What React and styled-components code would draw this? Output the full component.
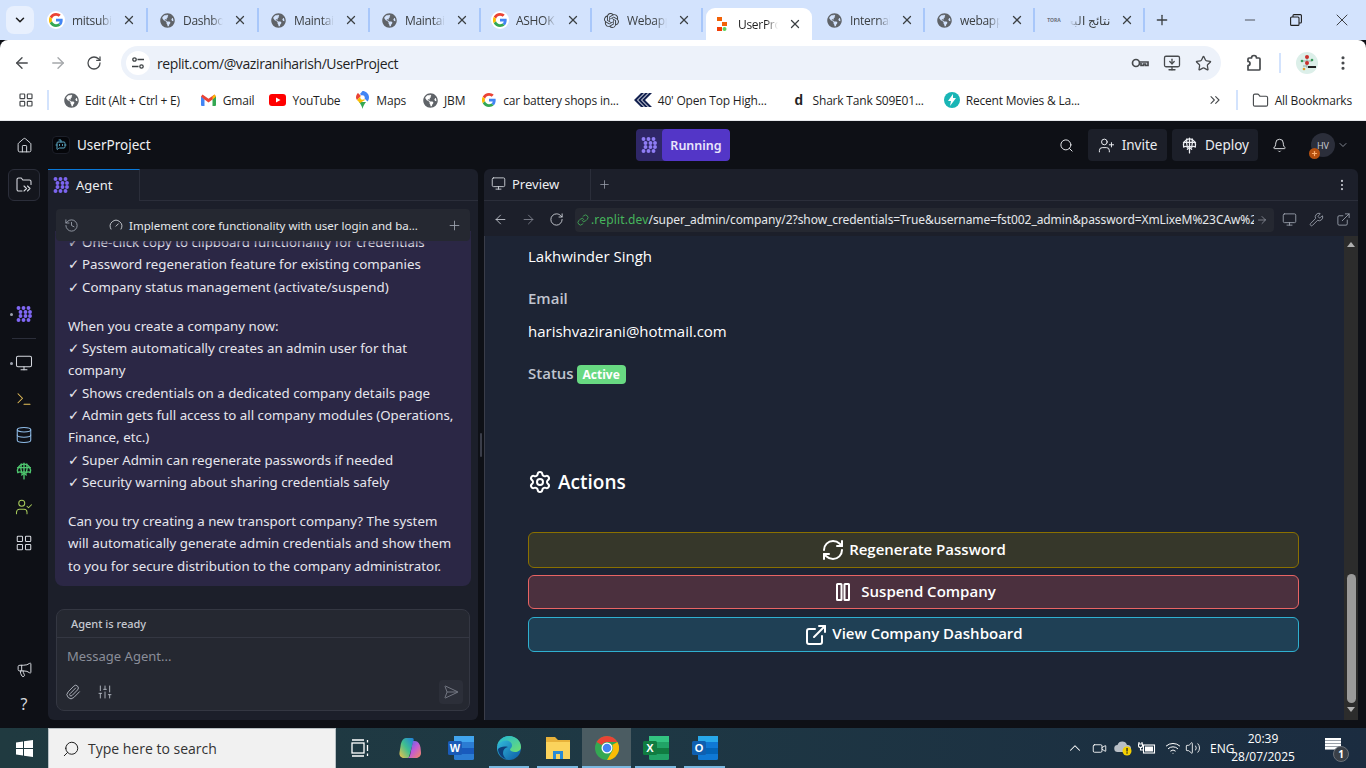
import React from "react";
import styled, { createGlobalStyle } from "styled-components";
import {
  ArrowLeft, ArrowRight, Bell, BotMessageSquare, ChevronDown, ChevronUp, ChevronsRight, Database,
  EllipsisVertical, ExternalLink, Folder, Gauge, History, House, LayoutGrid, Link as LinkIcon,
  Megaphone, Minus, Monitor, MonitorDown, Paperclip, Plus, RefreshCw, RotateCw,
  Search, SendHorizontal, Settings, SlidersVertical, Star, Terminal, UserCheck, UserPlus, Video,
  Volume2, Wifi, Wrench, X,
} from "lucide-react";
import { FaGlobeAmericas } from "react-icons/fa";
import { SiOpenai } from "react-icons/si";

const UI = `"Open Sans", "Noto Sans", sans-serif`;
const PLEX = `"Noto Sans", "Open Sans", sans-serif`;

const GlobalStyle = createGlobalStyle`
  html, body { margin: 0; height: 100%; overflow: hidden; background: #0e1016; }
  * { box-sizing: border-box; }
  #root { height: 100%; }
`;

/* small logos */
const GoogleG = ({ size = 16 }) => (
  <svg width={size} height={size} viewBox="0 0 48 48">
    <path fill="#EA4335" d="M24 9.5c3.5 0 6.700 1.200 9.200 3.600l6.900-6.900C35.900 2.400 30.400 0 24 0 14.600 0 6.500 5.400 2.600 13.200l8 6.200C12.500 13.700 17.800 9.500 24 9.500z" />
    <path fill="#4285F4" d="M46.900 24.500c0-1.600-.1-3.100-.4-4.500H24v9h12.900c-.6 3-2.200 5.500-4.700 7.200l7.700 6c4.500-4.200 7-10.300 7-17.700z" />
    <path fill="#FBBC05" d="M10.500 28.600A14.500 14.500 0 0 1 10.500 19.400l-8-6.200a24 24 0 0 0 0 21.600l8-6.200z" />
    <path fill="#34A853" d="M24 48c6.500 0 11.900-2.100 15.900-5.800l-7.700-6c-2.200 1.400-4.900 2.300-8.200 2.300-6.200 0-11.500-4.200-13.400-9.900l-8 6.200C6.500 42.600 14.600 48 24 48z" />
  </svg>
);
const GoogleBadge = () => <WhiteRound><GoogleG size={14} /></WhiteRound>;
const Globe = () => <FaGlobeAmericas size={15} color="#5f6368" />;
const ReplitMark = () => (
  <svg width="12" height="16" viewBox="0 0 12 16">
    <rect x="1" y="1" width="5" height="4" fill="#f26207" />
    <rect x="6" y="6" width="5" height="4" fill="#f26207" />
    <rect x="1" y="11" width="5" height="4" fill="#f23f07" />
    <circle cx="8.500" cy="13" r="2" fill="#5ad05a" />
  </svg>
);
const Gmail = () => (
  <svg width="15" height="12" viewBox="0 0 15 12">
    <path fill="#4285F4" d="M0 2v9a1 1 0 0 0 1 1h2.500V5z" />
    <path fill="#34A853" d="M15 2v9a1 1 0 0 1-1 1h-2.500V5z" />
    <path fill="#EA4335" d="M0 2.500 1.500.4 7.500 4.700 13.500.4 15 2.500 11.500 5.500 7.500 8.500 3.500 5.500z" />
    <path fill="#FBBC05" d="M11.500 2.500 13.500.4 15 2.500 11.500 5.500z" />
  </svg>
);
const YouTube = () => (
  <svg width="17" height="12" viewBox="0 0 17 12">
    <rect width="17" height="12" rx="3" fill="#f00" />
    <polygon points="7,3.500 11.500,6 7,8.500" fill="#fff" />
  </svg>
);
const MapsPin = () => (
  <svg width="13" height="18" viewBox="0 0 13 18">
    <path fill="#34A853" d="M3 11c1.500 2 3 4 3.500 7 .5-3 2-5 3.500-7z" />
    <path fill="#4285F4" d="M6.500 0C9.500 0 13 2.500 13 6.500c0 1.500-.7 3-1.500 4L4 3z" />
    <path fill="#EA4335" d="M2 2 5 5 1 9C.3 8.300 0 7.300 0 6.500 0 4.500.8 3 2 2z" />
    <path fill="#FBBC05" d="M1 9 5 5l4 4-5 3z" />
    <circle cx="6.500" cy="6.500" r="2.200" fill="#fff" />
  </svg>
);
const Stripes = () => (
  <svg width="18" height="14" viewBox="0 0 18 14">
    <path fill="#12204f" d="M7 0h3L3 7l7 7H7L0 7zM11 0h3L7 7l7 7h-3L4 7zM15 0h3l-7 7 7 7h-3L8 7z" />
  </svg>
);
const MoviesMark = () => (
  <svg width="16" height="18" viewBox="0 0 16 18">
    <circle cx="8" cy="9" r="8" fill="#19b5b5" />
    <path fill="#fff" d="M9 3 4 10h3l-1 5 6-8H9z" />
  </svg>
);
const AgentDots = ({ size = 16, color = "#7c65f0" }) => (
  <svg width={size} height={size} viewBox="0 0 16 16" fill={color}>
    {[[2.5, 2], [7.5, 2], [12.5, 2], [4.5, 6], [9.500, 6], [14, 6], [4.5, 10], [9.500, 10], [14, 10], [2.5, 14], [7.5, 14], [12.5, 14]].map(([x, y]) => (
      <circle key={`${x}-${y}`} cx={x} cy={y} r="1.950" />
    ))}
  </svg>
);
const FolderArrows = () => (
  <svg width="16" height="16" viewBox="0 0 16 16" fill="none" stroke="#d5d8de" strokeWidth="1.100" strokeLinecap="round" strokeLinejoin="round">
    <path d="M6 14H2.500A1.500 1.500 0 0 1 1 12.500v-10A1.500 1.500 0 0 1 2.500 1h2.800l1.500 2h6.700A1.500 1.500 0 0 1 15 4.500v3" />
    <path d="m8 9 2.500 2.500L8 14M11.500 9l2.500 2.500-2.500 2.500" />
  </svg>
);
const DeployGlobe = ({ size = 16, color = "currentColor" }) => (
  <svg width={size} height={size} viewBox="0 0 16 16" fill="none" stroke={color} strokeWidth="1.200" strokeLinecap="round" strokeLinejoin="round">
    <path d="M2.500 9.500A5.800 5.800 0 1 1 13.500 9.500C12 8.500 11 8.500 10 9.500 9 8.500 7 8.500 6 9.500 5 8.500 4 8.500 2.500 9.500z" />
    <path d="M8 1v8M5.500 1.800C5 5 5.300 7.500 6 9.500M10.500 1.800c.5 3.200.2 5.700-.5 7.700M2.300 5h11.400" />
    <path d="M8 15V9.500M6 11.500l2-2 2 2" />
  </svg>
);
const TuneIcon = () => (
  <svg width="14" height="14" viewBox="0 0 14 14" fill="none" stroke="#3c4043" strokeWidth="1.300">
    <circle cx="3.500" cy="3.500" r="1.700" />
    <path d="M6.500 3.500H13M1 10.500h6.500" />
    <circle cx="10.500" cy="10.500" r="1.700" />
  </svg>
);
const KeyIcon = () => (
  <svg width="18" height="10" viewBox="0 0 18 10" fill="none" stroke="#474a4d" strokeWidth="1.700">
    <circle cx="5" cy="5" r="3.500" />
    <path d="M8.500 4H17v3.500h-2.500V6h-2v1.500H10V5" />
  </svg>
);
const ExtensionIcon = () => (
  <svg width="18" height="18" viewBox="0 0 18 18" fill="none" stroke="#474a4d" strokeWidth="1.700" strokeLinejoin="round">
    <path d="M3 16h11a1 1 0 0 0 1-1V5a1 1 0 0 0-1-1h-2.500a2.500 2.500 0 0 0-5 0H4a1 1 0 0 0-1 1v2.500a2 2 0 0 1 0 4z" />
  </svg>
);
const RestoreIcon = () => (
  <svg width="12" height="12" viewBox="0 0 12 12" fill="none" stroke="#1f1f1f" strokeWidth="1.100">
    <rect x=".6" y="3" width="8.400" height="8.400" rx="1" />
    <path d="M3 3V1.600a1 1 0 0 1 1-1h6.400a1 1 0 0 1 1 1V8a1 1 0 0 1-1 1H9" />
  </svg>
);
const PauseBars = () => (
  <svg width="24" height="24" viewBox="0 0 24 24" fill="none" stroke="currentColor" strokeWidth="2">
    <rect x="6" y="4" width="4.500" height="16" rx=".5" />
    <rect x="13.500" y="4" width="4.500" height="16" rx=".5" />
  </svg>
);
const ProfileTree = () => (
  <svg width="22" height="22" viewBox="0 0 22 22">
    <circle cx="11" cy="11" r="11" fill="#dcefe9" />
    <path d="M11 4v12M6 9h10M7 14h4" stroke="#8a9a95" strokeWidth=".8" />
    <circle cx="11" cy="5" r="2" fill="#c9302c" />
    <circle cx="11" cy="11" r="2" fill="#c9302c" />
    <circle cx="6" cy="9" r="1.300" fill="#3a9a5a" />
    <circle cx="16" cy="8" r="1.300" fill="#3a9a5a" />
    <rect x="12" y="14" width="8" height="2" fill="#222" />
    <circle cx="8" cy="17" r="1.300" fill="#e0a030" />
  </svg>
);
const WindowsLogo = () => (
  <svg width="17" height="17" viewBox="0 0 17 17" fill="#fff">
    <path d="M0 2.400 7 1.400V8H0zM8 1.300 17 0v8H8zM0 9h7v6.600L0 14.600zM8 9h9v8l-9-1.300z" />
  </svg>
);
const TaskView = () => (
  <svg width="18" height="18" viewBox="0 0 18 18" fill="none" stroke="#fff" strokeWidth="1.300">
    <rect x="1" y="4" width="12" height="10" />
    <path d="M1 1h12M1 17h12M16.500 1v2.500M16.500 6v6M16.500 14.500V17" />
  </svg>
);
const CopilotLogo = () => (
  <svg width="24" height="24" viewBox="0 0 24 24">
    <defs>
      <linearGradient id="cpA" x1="0" y1="1" x2="1" y2="0"><stop offset="0" stopColor="#f5c24a" /><stop offset=".5" stopColor="#3fbf8f" /><stop offset="1" stopColor="#1f7ee0" /></linearGradient>
      <linearGradient id="cpB" x1="0" y1="0" x2="1" y2="1"><stop offset="0" stopColor="#3a6fe8" /><stop offset=".5" stopColor="#c05ad8" /><stop offset="1" stopColor="#f68a5c" /></linearGradient>
    </defs>
    <path fill="url(#cpA)" d="M8 2h6c1.500 0 2 1 1.600 2.500L11 21c-.4 1-1 1-2 1H6c-3 0-5-2.500-4.500-5.500l1-6C3 6 5 2 8 2z" />
    <path fill="url(#cpB)" d="M15 5h2c3 0 5 3 5.500 6.500l.5 5c.3 3-2 5.500-5 5.500H9c1.500 0 2.500-1 3-2.500z" />
  </svg>
);
const OfficeTile = ({ colors, letter, badge }) => (
  <svg width="26" height="26" viewBox="0 0 26 26">
    <rect x="6" y="1" width="20" height="24" rx="1.500" fill={colors[0]} />
    <rect x="6" y="1" width="20" height="6" fill={colors[1]} />
    <rect x="6" y="13" width="20" height="6" fill={colors[2]} />
    <rect x="0" y="6" width="14" height="14" rx="1.500" fill={badge} />
    <text x="7" y="17" textAnchor="middle" fontSize="11" fontWeight="700" fontFamily="Liberation Sans, sans-serif" fill="#fff">{letter}</text>
  </svg>
);
const EdgeLogo = () => (
  <svg width="26" height="26" viewBox="0 0 26 26">
    <defs>
      <linearGradient id="edA" x1="0" y1="0" x2="1" y2="1"><stop offset="0" stopColor="#36c6e0" /><stop offset="1" stopColor="#0c59a4" /></linearGradient>
      <linearGradient id="edB" x1="0" y1="0" x2="1" y2="1"><stop offset="0" stopColor="#1fb6d8" /><stop offset="1" stopColor="#6fe06f" /></linearGradient>
    </defs>
    <circle cx="13" cy="13" r="12" fill="url(#edA)" />
    <path fill="url(#edB)" d="M13 1c7 0 12 5 12 11 0 3.500-3 5-6 5-2.500 0-5-1-5-2.500 0-1 2-1.500 2-4 0-3-3-5-6-5-3.500 0-7 2-9 5C3 5 7.500 1 13 1z" />
    <path fill="#0e3f7a" d="M12 12c-3 .5-5 3-5 6 0 2 1 4 3 6-4-1-8-5-8-10 2-2 6-3 10-2z" />
  </svg>
);
const ExplorerLogo = () => (
  <svg width="26" height="24" viewBox="0 0 26 24">
    <path fill="#e8b23a" d="M1 1h9l3 3h12v19H1z" />
    <rect x="1" y="6" width="24" height="17" fill="#fbd35c" />
    <rect x="8" y="15" width="10" height="8" fill="#2a8ad4" />
    <rect x="11" y="18" width="4" height="5" fill="#fbd35c" />
  </svg>
);
const ChromeLogo = () => (
  <svg width="24" height="24" viewBox="0 0 48 48">
    <circle cx="24" cy="24" r="24" fill="#34a853" />
    <path fill="#ea4335" d="M24 0a24 24 0 0 1 20.800 12H24a12 12 0 0 0-10.400 6L3.200 12A24 24 0 0 1 24 0z" />
    <path fill="#fbbc05" d="M44.800 12A24 24 0 0 1 24 48l10.400-18A12 12 0 0 0 34.400 18z" />
    <circle cx="24" cy="24" r="11" fill="#fff" />
    <circle cx="24" cy="24" r="8.500" fill="#4285f4" />
  </svg>
);
const OneDriveWarn = () => (
  <svg width="18" height="16" viewBox="0 0 18 16">
    <path fill="#b9bfc6" d="M4 12a3.500 3.500 0 0 1-.5-7A5 5 0 0 1 13 5a3.500 3.500 0 0 1 1 7z" />
    <circle cx="13" cy="11" r="4.500" fill="#f4d000" />
    <rect x="12.400" y="8" width="1.300" height="3.500" fill="#222" />
    <rect x="12.400" y="12.300" width="1.300" height="1.300" fill="#222" />
  </svg>
);
const BatteryPlug = () => (
  <svg width="18" height="14" viewBox="0 0 18 14" fill="none" stroke="#fff" strokeWidth="1.100">
    <rect x="5.500" y="4" width="11" height="8" />
    <rect x="7" y="5.500" width="8" height="5" fill="#fff" stroke="none" />
    <path d="M1 1v2M4 1v2M.5 3h4v1.500a2 2 0 0 1-4 0zM2.500 6.500V9H5" />
  </svg>
);

/* page data */
const TABS = [
  { icon: <GoogleBadge />, label: "mitsubishi" },
  { icon: <Globe />, label: "Dashboard" },
  { icon: <Globe />, label: "Maintain" },
  { icon: <Globe />, label: "Maintain" },
  { icon: <GoogleBadge />, label: "ASHOK" },
  { icon: <SiOpenai size={15} color="#3c4043" />, label: "Webapp" },
  { icon: <ReplitMark />, label: "UserProject", active: true },
  { icon: <Globe />, label: "Internal", w: 110 },
  { icon: <Globe />, label: "webapp", w: 110 },
  { icon: <ToraMark>TORA</ToraMark>, label: "نتائج البحث", w: 110, rtl: true },
];

const BOOKMARKS = [
  { icon: <Globe />, label: "Edit (Alt + Ctrl + E)", after: 21 },
  { icon: <Gmail />, label: "Gmail", after: 15 },
  { icon: <YouTube />, label: "YouTube", after: 14 },
  { icon: <MapsPin />, label: "Maps", after: 16 },
  { icon: <Globe />, label: "JBM", after: 16 },
  { icon: <GoogleG size={14} />, label: "car battery shops in...", after: 15 },
  { icon: <Stripes />, label: "40' Open Top High...", after: 24 },
  { icon: <DMark>d</DMark>, label: "Shark Tank S09E01...", after: 20 },
  { icon: <MoviesMark />, label: "Recent Movies & La...", after: 0 },
];

const CHAT = [
  ["✓ One-click copy to clipboard functionality for credentials", "✓ Password regeneration feature for existing companies", "✓ Company status management (activate/suspend)"],
  ["When you create a company now:", "✓ System automatically creates an admin user for that", "company", "✓ Shows credentials on a dedicated company details page", "✓ Admin gets full access to all company modules (Operations,", "Finance, etc.)", "✓ Super Admin can regenerate passwords if needed", "✓ Security warning about sharing credentials safely"],
  ["Can you try creating a new transport company? The system", "will automatically generate admin credentials and show them", "to you for secure distribution to the company administrator."],
];

const RAIL_TOOLS = [
  { icon: <Monitor size={18} color="#d5d8de" strokeWidth={1.4} />, dot: true },
  { icon: <Terminal size={18} color="#e8c15a" strokeWidth={1.4} /> },
  { icon: <Database size={18} color="#8fbce8" strokeWidth={1.4} /> },
  { icon: <DeployGlobe size={18} color="#4fc76f" /> },
  { icon: <UserCheck size={18} color="#a6c95a" strokeWidth={1.4} /> },
  { icon: <LayoutGrid size={18} color="#d5d8de" strokeWidth={1.4} /> },
];

const ACTIONS = [
  { icon: <RefreshCw size={24} strokeWidth={2} />, label: "Regenerate Password", bg: "#36372a", line: "#8a7000", h: 36, gap: 4, top: 0 },
  { icon: <PauseBars />, label: "Suspend Company", bg: "#4b303e", line: "#e86464", h: 34, gap: 6, top: 0 },
  { icon: <ExternalLink size={24} strokeWidth={2} />, label: "View Company Dashboard", bg: "#1f4055", line: "#2fb0d0", h: 35, gap: 4, top: 1 },
];

const TASK_APPS = [
  { icon: <TaskView />, w: 48 },
  { icon: <CopilotLogo />, w: 52 },
  { icon: <OfficeTile colors={["#2b7cd3", "#41a5ee", "#185abd"]} letter="W" badge="#1a5bb8" />, w: 49 },
  { icon: <EdgeLogo />, w: 48, open: true },
  { icon: <ExplorerLogo />, w: 49, open: true },
  { icon: <ChromeLogo />, w: 49, open: true, active: true },
  { icon: <OfficeTile colors={["#21a366", "#33c481", "#107c41"]} letter="X" badge="#107c41" />, w: 49, open: true },
  { icon: <OfficeTile colors={["#0f78d4", "#28a8ea", "#0364b8"]} letter="O" badge="#0f5fb0" />, w: 49, open: true },
];

const TRAY_ICONS = [
  { w: 24, icon: <ChevronUp size={18} strokeWidth={1.4} color="#fff" /> },
  { w: 24, icon: <Video size={15} strokeWidth={1.4} color="#fff" /> },
  { w: 23, icon: <OneDriveWarn /> },
  { w: 26, icon: <BatteryPlug /> },
  { w: 25, icon: <Wifi size={16} strokeWidth={1.5} color="#fff" /> },
  { w: 16, icon: <Volume2 size={16} strokeWidth={1.3} color="#fff" /> },
];

const renderChatLine = (line) =>
  line.startsWith("✓ ") ? (
    <ChatLine key={line}>
      <Tick>✓</Tick>
      {line.slice(2)}
    </ChatLine>
  ) : (
    <ChatLine key={line}>{line}</ChatLine>
  );

const App = () => {
  return (
    <Page>
      <GlobalStyle />
      <TabStrip>
        <TabMenu><ChevronDown size={14} strokeWidth={2.6} color="#1f1f1f" /></TabMenu>
        {TABS.map((tab, i) => (
          <Tab key={i} $active={tab.active} $w={tab.w}>
            <TabIcon>{tab.icon}</TabIcon>
            <TabLabel $active={tab.active} $rtl={tab.rtl} dir={tab.rtl ? "rtl" : undefined}>{tab.label}</TabLabel>
            <TabClose><X size={14} strokeWidth={2.2} color="#3c4043" /></TabClose>
          </Tab>
        ))}
        <NewTab><Plus size={16} strokeWidth={2} color="#3c4043" /></NewTab>
        <WindowControls>
          <WindowButton><Minus size={16} strokeWidth={1.1} color="#1f1f1f" /></WindowButton>
          <WindowButton><RestoreIcon /></WindowButton>
          <WindowButton><X size={20} strokeWidth={1} color="#1f1f1f" /></WindowButton>
        </WindowControls>
      </TabStrip>

      <Toolbar>
        <NavIcon><ArrowLeft size={18} strokeWidth={1.8} color="#474a4d" /></NavIcon>
        <NavIcon><ArrowRight size={18} strokeWidth={1.8} color="#a5a8ab" /></NavIcon>
        <NavIcon><RotateCw size={16} strokeWidth={1.9} color="#474a4d" /></NavIcon>
        <Omnibox>
          <TuneBadge><TuneIcon /></TuneBadge>
          <OmniText>replit.com/@vaziraniharish/UserProject</OmniText>
          <OmniActions>
            <KeyIcon />
            <MonitorDown size={18} strokeWidth={1.7} color="#474a4d" />
            <Star size={17} strokeWidth={1.8} color="#474a4d" />
          </OmniActions>
        </Omnibox>
        <ExtensionIcon />
        <ToolbarDivider />
        <ProfileBadge><ProfileTree /></ProfileBadge>
        <EllipsisVertical size={18} strokeWidth={2.2} color="#474a4d" />
      </Toolbar>

      <BookmarkBar>
        <LayoutGrid size={16} strokeWidth={1.8} color="#474a4d" />
        <ToolbarDivider $tight />
        {BOOKMARKS.map((b) => (
          <Bookmark key={b.label} $after={b.after}>
            <BookmarkIcon>{b.icon}</BookmarkIcon>
            <span>{b.label}</span>
          </Bookmark>
        ))}
        <BookmarkEnd>
          <ChevronsRight size={16} strokeWidth={1.6} color="#474a4d" />
          <ToolbarDivider $tight />
          <Bookmark $after={0}>
            <BookmarkIcon><Folder size={17} strokeWidth={1.6} color="#474a4d" /></BookmarkIcon>
            <span>All Bookmarks</span>
          </Bookmark>
        </BookmarkEnd>
      </BookmarkBar>

      <Workspace>
        <Rail>
          <RailButton><House size={17} strokeWidth={1.4} color="#d5d8de" /></RailButton>
          <RailButton $active><FolderArrows /></RailButton>
          <RailAgent>
            <RailDot />
            <AgentDots size={16} color="#8068f5" />
          </RailAgent>
          <RailDivider />
          {RAIL_TOOLS.map((tool, i) => (
            <RailTool key={i}>
              {tool.dot && <RailDot />}
              {tool.icon}
            </RailTool>
          ))}
          <RailBottom>
            <RailButton><Megaphone size={17} strokeWidth={1.4} color="#d5d8de" /></RailButton>
            <RailButton><HelpMark>?</HelpMark></RailButton>
          </RailBottom>
        </Rail>

        <Main>
          <TopBar>
            <ProjectBlock>
              <ProjectIcon><BotMessageSquare size={12} color="#5ba8c4" strokeWidth={2} /></ProjectIcon>
              <ProjectName>UserProject</ProjectName>
            </ProjectBlock>
            <RunButton>
              <RunIcon><AgentDots size={16} color="#8f7df5" /></RunIcon>
              <RunLabel>Running</RunLabel>
            </RunButton>
            <TopActions>
              <Search size={15} strokeWidth={1.6} color="#e4e6ea" />
              <TopPills>
                <TopPill $w={79}><UserPlus size={17} strokeWidth={1.4} />Invite</TopPill>
                <TopPill $w={86}><DeployGlobe size={17} />Deploy</TopPill>
              </TopPills>
              <Bell size={15} strokeWidth={1.5} color="#e4e6ea" />
              <AvatarWrap>
                <Avatar>HV</Avatar>
                <AvatarBadge><Plus size={7} strokeWidth={4} color="#ffb070" /></AvatarBadge>
              </AvatarWrap>
              <ChevronDown size={12} strokeWidth={1.6} color="#9da2ae" />
            </TopActions>
          </TopBar>

          <Panels>
            <AgentPanel>
              <PanelHead>
                <AgentTab>
                  <AgentDots size={16} />
                  <span>Agent</span>
                </AgentTab>
              </PanelHead>
              <SessionBar>
                <History size={15} strokeWidth={1.4} color="#9da2ae" />
                <SessionTitle>
                  <Gauge size={14} strokeWidth={1.5} color="#d5d8de" />
                  <span>Implement core functionality with user login and ba...</span>
                </SessionTitle>
                <Plus size={15} strokeWidth={1.4} color="#9da2ae" />
              </SessionBar>
              <ChatScroll>
                <Bubble>
                  {CHAT.map((para, i) => (
                    <Paragraph key={i}>{para.map(renderChatLine)}</Paragraph>
                  ))}
                  <BubbleFade />
                </Bubble>
              </ChatScroll>
              <Composer>
                <ComposerStatus>Agent is ready</ComposerStatus>
                <ComposerInput>Message Agent...</ComposerInput>
                <ComposerTools>
                  <Paperclip size={16} strokeWidth={1.4} color="#b4b8c2" />
                  <SlidersVertical size={16} strokeWidth={1.4} color="#b4b8c2" />
                  <SendButton><SendHorizontal size={16} strokeWidth={1.3} color="#7e828d" /></SendButton>
                </ComposerTools>
              </Composer>
            </AgentPanel>

            <Resizer><ResizerGrip /></Resizer>

            <PreviewPanel>
              <PanelHead>
                <PreviewTab>
                  <Monitor size={15} strokeWidth={1.4} color="#d5d8de" />
                  <span>Preview</span>
                </PreviewTab>
                <Plus size={13} strokeWidth={1.4} color="#9da2ae" />
                <PanelMenu><EllipsisVertical size={14} strokeWidth={1.8} color="#c5c8d0" /></PanelMenu>
              </PanelHead>
              <UrlRow>
                <UrlNav>
                  <ArrowLeft size={15} strokeWidth={1.4} color="#c5c8d0" />
                  <ArrowRight size={15} strokeWidth={1.4} color="#80848f" />
                  <RotateCw size={15} strokeWidth={1.4} color="#d5d8de" />
                </UrlNav>
                <UrlBox>
                  <LinkIcon size={12} strokeWidth={1.6} color="#46b65c" />
                  <UrlText><UrlHost>.replit.dev</UrlHost>/super_admin/company/2?show_credentials=True&amp;username=fst002_admin&amp;password=XmLixeM%23CAw%2C</UrlText>
                  <ArrowRight size={12} strokeWidth={1.4} color="#9da2ae" />
                </UrlBox>
                <UrlTools>
                  <Monitor size={15} strokeWidth={1.4} color="#9da2ae" />
                  <Wrench size={15} strokeWidth={1.4} color="#9da2ae" />
                  <ExternalLink size={15} strokeWidth={1.4} color="#9da2ae" />
                </UrlTools>
              </UrlRow>
              <PreviewBody>
                <PreviewPage>
                  <FieldValue>Lakhwinder Singh</FieldValue>
                  <FieldLabel>Email</FieldLabel>
                  <FieldValue>harishvazirani@hotmail.com</FieldValue>
                  <StatusRow>
                    <FieldLabelInline>Status</FieldLabelInline>
                    <StatusBadge>Active</StatusBadge>
                  </StatusRow>
                  <ActionsTitle>
                    <Settings size={24} strokeWidth={2} />
                    Actions
                  </ActionsTitle>
                  <ActionList>
                    {ACTIONS.map((a) => (
                      <ActionButton key={a.label} $bg={a.bg} $line={a.line} $h={a.h} $gap={a.gap} $top={a.top}>
                        {a.icon}
                        <ActionLabel>{a.label}</ActionLabel>
                      </ActionButton>
                    ))}
                  </ActionList>
                </PreviewPage>
                <Scrollbar>
                  <ScrollArrow $up />
                  <ScrollThumb />
                  <ScrollArrow />
                </Scrollbar>
              </PreviewBody>
            </PreviewPanel>
          </Panels>
        </Main>
      </Workspace>

      <Taskbar>
        <StartButton><WindowsLogo /></StartButton>
        <TaskSearch>
          <MirrorIcon><Search size={18} strokeWidth={1.3} color="#1a1a1a" /></MirrorIcon>
          <span>Type here to search</span>
        </TaskSearch>
        {TASK_APPS.map((app, i) => (
          <TaskApp key={i} $w={app.w} $open={app.open} $active={app.active}>{app.icon}</TaskApp>
        ))}
        <Tray>
          {TRAY_ICONS.map((item, i) => (
            <TraySlot key={i} $w={item.w}>{item.icon}</TraySlot>
          ))}
          <TrayText>ENG</TrayText>
          <Clock>
            <span>20:39</span>
            <span>28/07/2025</span>
          </Clock>
          <NoticeBox>
            <NoticeBubble />
            <NoticeCount>1</NoticeCount>
          </NoticeBox>
        </Tray>
      </Taskbar>
    </Page>
  );
};

export default App;

function ToraMark({ children }) {
  return <ToraText>{children}</ToraText>;
}
function DMark({ children }) {
  return <DText>{children}</DText>;
}

const Page = styled.div`
  height: 768px;
  width: 1366px;
  display: flex;
  flex-direction: column;
  overflow: hidden;
  font-family: ${UI};
`;

/* chrome tabs */
const TabStrip = styled.div`
  height: 40px;
  flex: none;
  background: #d3e3fd;
  display: flex;
  align-items: flex-end;
  padding-left: 6px;
`;
const TabMenu = styled.div`
  width: 28px;
  height: 28px;
  margin: 0 3px 6px 0;
  border-radius: 8px;
  background: #e8f0fe;
  display: flex;
  align-items: center;
  justify-content: center;
`;
const Tab = styled.div`
  width: ${({ $active, $w }) => ($active ? "106px" : `${$w || 111}px`)};
  margin: ${({ $active }) => ($active ? "0 3px" : "0")};
  height: ${({ $active }) => ($active ? "32px" : "24px")};
  margin-bottom: ${({ $active }) => ($active ? "0" : "8px")};
  padding-left: ${({ $active }) => ($active ? "8px" : "11px")};
  display: flex;
  align-items: center;
  background: ${({ $active }) => ($active ? "#fff" : "transparent")};
  border-radius: ${({ $active }) => ($active ? "9px 9px 0 0" : "0")};
  border-right: ${({ $active }) => ($active ? "none" : "2px solid #a8c7fa")};
  position: relative;
`;
const TabIcon = styled.div`
  width: 16px;
  height: 16px;
  display: flex;
  align-items: center;
  justify-content: center;
  flex: none;
`;
const WhiteRound = styled.span`
  width: 18px;
  height: 18px;
  border-radius: 50%;
  background: #fff;
  display: flex;
  align-items: center;
  justify-content: center;
  flex: none;
`;
const TabLabel = styled.div`
  margin-left: 8px;
  width: 40px;
  flex: none;
  overflow: hidden;
  white-space: nowrap;
  font-size: 12px;
  letter-spacing: -0.3px;
  color: ${({ $active }) => ($active ? "#1f1f1f" : "#3c4043")};
  -webkit-mask-image: linear-gradient(${({ $rtl }) => ($rtl ? "270deg" : "90deg")}, #000 70%, transparent);
  mask-image: linear-gradient(${({ $rtl }) => ($rtl ? "270deg" : "90deg")}, #000 70%, transparent);
`;
const TabClose = styled.div`
  margin-left: 9px;
  width: 16px;
  display: flex;
  justify-content: center;
`;
const ToraText = styled.span`
  font-size: 5px;
  font-weight: 700;
  color: #6a6f78;
`;
const DText = styled.span`
  font: 700 14px "Liberation Sans", sans-serif;
  color: #222;
`;
const NewTab = styled.div`
  margin: 0 0 8px 7px;
  width: 20px;
  height: 24px;
  display: flex;
  align-items: center;
  justify-content: center;
`;
const WindowControls = styled.div`
  margin-left: auto;
  height: 40px;
  display: flex;
  align-self: flex-start;
  padding-right: 1px;
`;
const WindowButton = styled.div`
  width: 46px;
  display: flex;
  align-items: center;
  justify-content: center;
`;

/* chrome toolbar */
const Toolbar = styled.div`
  height: 44px;
  flex: none;
  background: #fff;
  border-radius: 8px 8px 0 0;
  padding: 6px 14px 4px 4px;
  display: flex;
  align-items: center;
`;
const NavIcon = styled.div`
  width: 36px;
  display: flex;
  justify-content: center;
`;
const Omnibox = styled.div`
  margin: 0 24px 0 9px;
  flex: 1;
  height: 34px;
  border-radius: 17px;
  background: #edf2fa;
  padding: 0 9px 0 5px;
  display: flex;
  align-items: center;
`;
const TuneBadge = styled.div`
  width: 24px;
  height: 24px;
  border-radius: 50%;
  background: #fff;
  display: flex;
  align-items: center;
  justify-content: center;
`;
const OmniText = styled.div`
  margin-left: 7px;
  font-size: 14px;
  letter-spacing: -0.4px;
  color: #1f1f1f;
`;
const OmniActions = styled.div`
  margin-left: auto;
  display: flex;
  align-items: center;
  gap: 14px;
`;
const ToolbarDivider = styled.div`
  width: 2px;
  height: 20px;
  background: #d3e3fd;
  margin: ${({ $tight }) => ($tight ? "0 14px 0 13px" : "0 15px 0 16px")};
`;
const ProfileBadge = styled.div`
  width: 22px;
  height: 22px;
  margin-right: 16px;
  display: flex;
`;

/* bookmarks */
const BookmarkBar = styled.div`
  height: 37px;
  flex: none;
  background: #fff;
  padding: 0 14px 4px 18px;
  display: flex;
  align-items: center;
  border-bottom: 1px solid #e6e8ec;
`;
const Bookmark = styled.div`
  display: flex;
  align-items: center;
  gap: 6px;
  margin-right: ${({ $after }) => $after}px;
  font-size: 12px;
  letter-spacing: -0.2px;
  color: #1f1f1f;
  white-space: nowrap;
`;
const BookmarkIcon = styled.div`
  display: flex;
  align-items: center;
  justify-content: center;
  min-width: 16px;
`;
const BookmarkEnd = styled.div`
  margin-left: auto;
  display: flex;
  align-items: center;
`;

/* replit shell */
const Workspace = styled.div`
  flex: 1;
  min-height: 0;
  display: flex;
  background: #0e1016;
  font-family: ${PLEX};
`;
const Rail = styled.div`
  width: 48px;
  flex: none;
  padding: 8px 0;
  display: flex;
  flex-direction: column;
  align-items: center;
  gap: 8px;
`;
const RailButton = styled.div`
  width: 32px;
  height: 32px;
  border-radius: 6px;
  display: flex;
  align-items: center;
  justify-content: center;
  background: ${({ $active }) => ($active ? "#14161d" : "transparent")};
  border: 1px solid ${({ $active }) => ($active ? "#2b2e3a" : "transparent")};
`;
const RailAgent = styled.div`
  position: relative;
  width: 48px;
  height: 32px;
  margin-top: 89px;
  display: flex;
  align-items: center;
  justify-content: center;
`;
const RailDot = styled.span`
  position: absolute;
  left: 10px;
  top: 50%;
  width: 3px;
  height: 3px;
  margin-top: -1.500px;
  border-radius: 50%;
  background: #9da2ae;
`;
const RailDivider = styled.div`
  width: 24px;
  height: 1px;
  background: #2b2e3a;
  margin-bottom: -2px;
`;
const RailTool = styled.div`
  position: relative;
  width: 48px;
  height: 36px;
  margin-bottom: -8px;
  display: flex;
  align-items: center;
  justify-content: center;
`;
const RailBottom = styled.div`
  margin-top: auto;
  display: flex;
  flex-direction: column;
  gap: 3px;
`;
const HelpMark = styled.span`
  font-size: 16px;
  color: #d5d8de;
`;
const Main = styled.div`
  flex: 1;
  min-width: 0;
  display: flex;
  flex-direction: column;
`;
const TopBar = styled.div`
  height: 48px;
  flex: none;
  display: flex;
  align-items: center;
`;
const ProjectBlock = styled.div`
  width: 588px;
  padding-left: 4px;
  display: flex;
  align-items: center;
  gap: 7px;
`;
const ProjectIcon = styled.div`
  width: 18px;
  height: 18px;
  border-radius: 4px;
  background: #05060a;
  border: 1px solid #1c1f29;
  display: flex;
  align-items: center;
  justify-content: center;
`;
const ProjectName = styled.div`
  font-size: 13.500px;
  color: #f0f1f4;
`;
const RunButton = styled.div`
  height: 32px;
  width: 94px;
  display: flex;
  border-radius: 4px;
  overflow: hidden;
  background: #2f2768;
`;
const RunIcon = styled.div`
  width: 26px;
  display: flex;
  align-items: center;
  justify-content: center;
`;
const RunLabel = styled.div`
  flex: 1;
  background: #5336c7;
  border-radius: 4px;
  color: #e8e5fb;
  font-size: 12.500px;
  font-weight: 600;
  display: flex;
  align-items: center;
  justify-content: center;
`;
const TopActions = styled.div`
  margin-left: auto;
  padding-right: 17px;
  display: flex;
  align-items: center;
`;
const TopPills = styled.div`
  display: flex;
  gap: 5px;
  margin: 0 14px;
`;
const TopPill = styled.div`
  width: ${({ $w }) => $w}px;
  height: 32px;
  border-radius: 4px;
  background: #1c1f29;
  color: #eceef2;
  font-size: 13.500px;
  display: flex;
  align-items: center;
  justify-content: center;
  gap: 7px;
`;
const AvatarWrap = styled.div`
  position: relative;
  margin: 0 2px 0 24px;
`;
const Avatar = styled.div`
  width: 24px;
  height: 24px;
  border-radius: 50%;
  background: #2b2e3a;
  color: #c5c8d0;
  font-size: 9px;
  display: flex;
  align-items: center;
  justify-content: center;
`;
const AvatarBadge = styled.div`
  position: absolute;
  left: -2px;
  bottom: -2px;
  width: 11px;
  height: 11px;
  border-radius: 50%;
  background: #b5500f;
  display: flex;
  align-items: center;
  justify-content: center;
`;

const Panels = styled.div`
  flex: 1;
  min-height: 0;
  display: flex;
  padding: 0 8px 8px 0;
`;
const AgentPanel = styled.div`
  position: relative;
  width: 430px;
  flex: none;
  display: flex;
  flex-direction: column;
  background: #1c1f2a;
  border-radius: 0 6px 6px 6px;
  overflow: hidden;
`;
const PanelHead = styled.div`
  height: 32px;
  flex: none;
  display: flex;
  align-items: center;
  border-bottom: 1px solid #2b2e3a;
`;
const AgentTab = styled.div`
  width: 92px;
  height: 32px;
  margin-bottom: -1px;
  padding: 0 5px 2px;
  display: flex;
  align-items: center;
  gap: 7px;
  font-size: 13px;
  color: #eceef2;
  background: #1c1f2a;
  border-top: 1px solid #0a79d8;
  border-right: 1px solid #2b2e3a;
`;
const SessionBar = styled.div`
  position: absolute;
  z-index: 2;
  top: 40px;
  left: 8px;
  right: 8px;
  height: 32px;
  border-radius: 4px;
  background: #252831;
  padding: 0 8px;
  display: flex;
  align-items: center;
`;
const SessionTitle = styled.div`
  flex: 1;
  padding-left: 30px;
  display: flex;
  align-items: center;
  gap: 6px;
  font-size: 11.500px;
  color: #e6e8ec;
  white-space: nowrap;
`;
const ChatScroll = styled.div`
  flex: 1;
  min-height: 0;
  overflow: hidden;
  display: flex;
  flex-direction: column;
  justify-content: flex-end;
  padding: 0 7px 23px;
`;
const Bubble = styled.div`
  position: relative;
  flex: none;
  background: #2b2745;
  border-radius: 8px;
  padding: 0 13px 9px;
  color: #e6e6ed;
  font-size: 13.300px;
`;
const BubbleFade = styled.div`
  position: absolute;
  top: 0;
  left: 0;
  right: 0;
  height: 14px;
  background: linear-gradient(#2b2745, rgba(43, 39, 69, 0.3));
`;
const Paragraph = styled.div`
  & + & {
    margin-top: 16.700px;
  }
`;
const ChatLine = styled.div`
  height: 22.330px;
  line-height: 22.330px;
  white-space: nowrap;
`;
const Tick = styled.span`
  display: inline-block;
  width: 14px;
  line-height: 1;
  font-family: "DejaVu Sans", sans-serif;
  font-size: 13.500px;
  font-weight: 700;
`;
const Composer = styled.div`
  margin: 0 8px 9px;
  height: 102px;
  flex: none;
  background: #252831;
  border: 1px solid #343742;
  border-radius: 8px;
  display: flex;
  flex-direction: column;
`;
const ComposerStatus = styled.div`
  height: 28px;
  flex: none;
  padding-left: 14px;
  border-bottom: 1px solid #343742;
  display: flex;
  align-items: center;
  font-size: 11px;
  font-weight: 500;
  color: #c5c8d0;
`;
const ComposerInput = styled.div`
  padding: 9px 10px 0;
  font-size: 13px;
  color: #8a8e99;
`;
const ComposerTools = styled.div`
  margin-top: auto;
  padding: 0 6px 6px 8px;
  display: flex;
  align-items: center;
  gap: 16px;
`;
const SendButton = styled.div`
  margin-left: auto;
  width: 24px;
  height: 24px;
  border-radius: 4px;
  background: #2c2f39;
  display: flex;
  align-items: center;
  justify-content: center;
`;
const Resizer = styled.div`
  width: 6px;
  flex: none;
  display: flex;
  align-items: center;
  justify-content: center;
`;
const ResizerGrip = styled.div`
  width: 2px;
  height: 24px;
  border-radius: 1px;
  background: #3a3d49;
`;
const PreviewPanel = styled.div`
  flex: 1;
  min-width: 0;
  display: flex;
  flex-direction: column;
  background: #1c1f2a;
  border-radius: 6px 6px 0 0;
  overflow: hidden;
`;
const PreviewTab = styled.div`
  width: 107px;
  height: 32px;
  margin-right: 7px;
  padding: 0 0 2px 7px;
  border-right: 1px solid #2b2e3a;
  display: flex;
  align-items: center;
  gap: 6px;
  font-size: 13px;
  color: #eceef2;
`;
const PanelMenu = styled.div`
  margin-left: auto;
  padding-right: 9px;
  display: flex;
`;
const UrlRow = styled.div`
  height: 35px;
  flex: none;
  display: flex;
  align-items: center;
  padding-top: 2px;
`;
const UrlNav = styled.div`
  width: 91px;
  padding-left: 9px;
  display: flex;
  gap: 13px;
`;
const UrlBox = styled.div`
  width: 699px;
  height: 24px;
  border-radius: 4px;
  background: #252831;
  padding: 0 6px 0 2px;
  display: flex;
  align-items: center;
  gap: 2px;
`;
const UrlText = styled.div`
  flex: 1;
  min-width: 0;
  overflow: hidden;
  white-space: nowrap;
  font-size: 12px;
  letter-spacing: -0.07px;
  color: #e6e8ec;
`;
const UrlHost = styled.span`
  color: #46b65c;
  letter-spacing: 0.15px;
`;
const UrlTools = styled.div`
  margin-left: 8px;
  display: flex;
  gap: 12px;
`;
const PreviewBody = styled.div`
  flex: 1;
  min-height: 0;
  display: flex;
  background: #1d2434;
  border-left: 1px solid #3a3d49;
`;
const PreviewPage = styled.div`
  flex: 1;
  min-width: 0;
  padding: 8px 45px 0 43px;
  color: #fff;
  font-family: ${UI};
`;
const FieldValue = styled.div`
  font-size: 15px;
  line-height: 24px;
`;
const FieldLabel = styled.div`
  font-size: 15px;
  font-weight: 600;
  line-height: 24px;
  color: #c0c5cf;
  margin: 18px 0 9px;
`;
const StatusRow = styled.div`
  display: flex;
  align-items: center;
  gap: 3px;
  margin-top: 18px;
  height: 24px;
`;
const FieldLabelInline = styled.span`
  font-size: 15px;
  font-weight: 600;
  color: #c0c5cf;
`;
const StatusBadge = styled.span`
  width: 49px;
  height: 19px;
  margin-top: 3px;
  border-radius: 4px;
  background: #68d982;
  font-size: 12px;
  font-weight: 700;
  display: flex;
  align-items: center;
  justify-content: center;
`;
const ActionsTitle = styled.div`
  margin-top: 83px;
  height: 28px;
  display: flex;
  align-items: center;
  gap: 6px;
  font-size: 19px;
  font-weight: 600;
`;
const ActionList = styled.div`
  margin-top: 36px;
  display: flex;
  flex-direction: column;
  gap: 7px;
`;
const ActionButton = styled.div`
  height: ${({ $h }) => $h}px;
  margin-top: ${({ $top }) => $top}px;
  background: ${({ $bg }) => $bg};
  border: 1px solid ${({ $line }) => $line};
  border-radius: 6px;
  display: flex;
  align-items: center;
  justify-content: center;
  gap: ${({ $gap }) => $gap}px;
  font-size: 15px;
  font-weight: 600;
`;
const ActionLabel = styled.span`
  margin-top: -3px;
`;
const Scrollbar = styled.div`
  width: 14px;
  flex: none;
  background: #2c2c2c;
  padding: 6px 2px 8px;
  display: flex;
  flex-direction: column;
  align-items: center;
`;
const ScrollArrow = styled.div`
  width: 0;
  height: 0;
  flex: none;
  border-left: 4.500px solid transparent;
  border-right: 4.500px solid transparent;
  border-${({ $up }) => ($up ? "bottom" : "top")}: 5px solid #b0b0b0;
`;
const ScrollThumb = styled.div`
  margin: auto 0 4px;
  width: 9px;
  height: 129px;
  border-radius: 5px;
  background: #9a9a9a;
`;

/* windows taskbar */
const Taskbar = styled.div`
  height: 40px;
  flex: none;
  background: linear-gradient(90deg, #203a40, #1e3844 45%, #1b2c40);
  display: flex;
  align-items: stretch;
`;
const StartButton = styled.div`
  width: 48px;
  display: flex;
  align-items: center;
  justify-content: center;
`;
const TaskSearch = styled.div`
  width: 288px;
  background: #f1f1f1;
  border: 1px solid #b8c0c4;
  border-bottom: none;
  padding-left: 13px;
  display: flex;
  align-items: center;
  gap: 8px;
  font-size: 14px;
  color: #333;
`;
const MirrorIcon = styled.span`
  display: flex;
  transform: scaleX(-1);
`;
const TaskApp = styled.div`
  position: relative;
  width: ${({ $w }) => $w}px;
  display: flex;
  align-items: center;
  justify-content: center;
  background: ${({ $active }) => ($active ? "#4b5c62" : "transparent")};
  &::after {
    content: "";
    display: ${({ $open }) => ($open ? "block" : "none")};
    position: absolute;
    bottom: 0;
    height: 2px;
    left: ${({ $active }) => ($active ? "0" : "4px")};
    right: ${({ $active }) => ($active ? "0" : "4px")};
    background: #7ab8e0;
  }
`;
const Tray = styled.div`
  margin-left: auto;
  padding-right: 21px;
  display: flex;
  align-items: center;
  color: #fff;
`;
const TraySlot = styled.div`
  width: ${({ $w }) => $w}px;
  display: flex;
  justify-content: center;
`;
const TrayText = styled.div`
  width: 31px;
  padding-left: 9px;
  font-size: 12px;
  white-space: nowrap;
`;
const Clock = styled.div`
  width: 62px;
  display: flex;
  flex-direction: column;
  align-items: center;
  gap: 2px;
  font-size: 12px;
  line-height: 16px;
  white-space: nowrap;
`;
const NoticeBox = styled.div`
  position: relative;
  width: 24px;
  height: 24px;
  margin-left: 27px;
`;
const NoticeBubble = styled.div`
  position: absolute;
  left: 4px;
  top: 2px;
  width: 16px;
  height: 12px;
  background: repeating-linear-gradient(#fff 0 2px, #9aa0a8 2px 3px);
`;
const NoticeCount = styled.div`
  position: absolute;
  right: -4px;
  bottom: -2px;
  width: 16px;
  height: 16px;
  border-radius: 50%;
  background: #3a4048;
  border: 1px solid #6a7078;
  font-size: 10px;
  font-weight: 700;
  display: flex;
  align-items: center;
  justify-content: center;
`;
